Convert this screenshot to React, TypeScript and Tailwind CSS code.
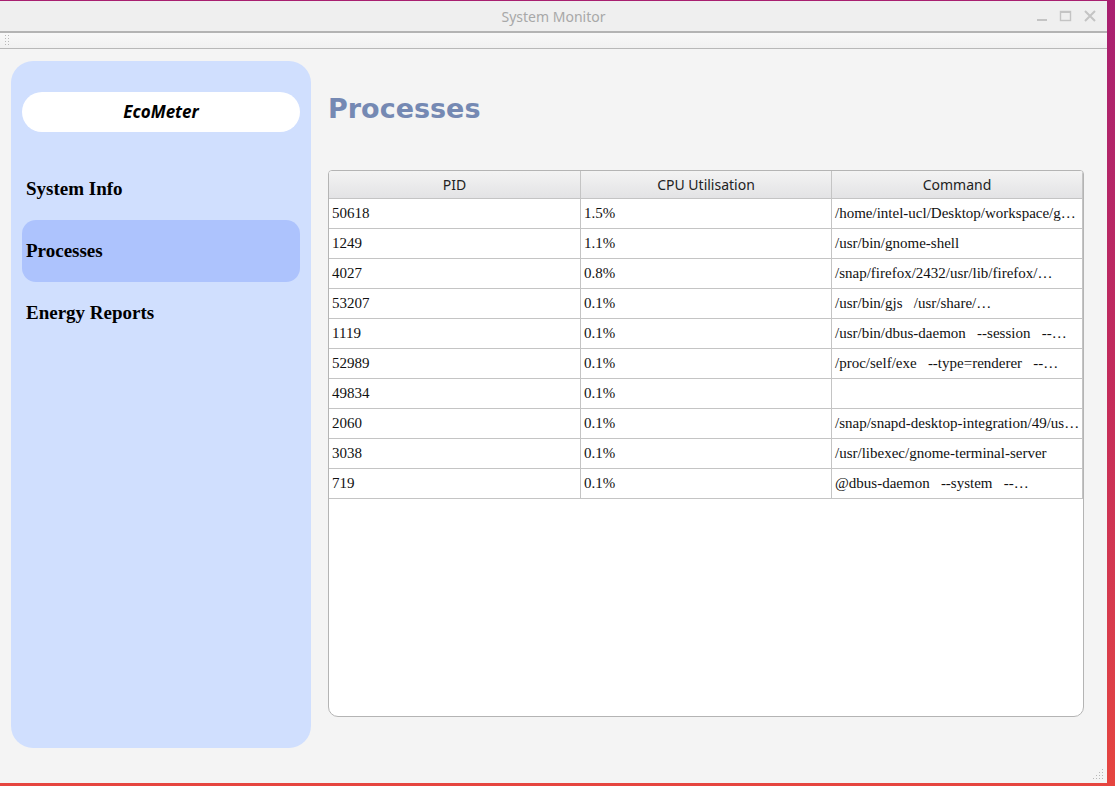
import React from "react";

const rows: [string, string, string][] = [
  ["50618", "1.5%", "/home/intel-ucl/Desktop/workspace/g…"],
  ["1249", "1.1%", "/usr/bin/gnome-shell"],
  ["4027", "0.8%", "/snap/firefox/2432/usr/lib/firefox/…"],
  ["53207", "0.1%", "/usr/bin/gjs   /usr/share/…"],
  ["1119", "0.1%", "/usr/bin/dbus-daemon   --session   --…"],
  ["52989", "0.1%", "/proc/self/exe   --type=renderer   --…"],
  ["49834", "0.1%", ""],
  ["2060", "0.1%", "/snap/snapd-desktop-integration/49/us…"],
  ["3038", "0.1%", "/usr/libexec/gnome-terminal-server"],
  ["719", "0.1%", "@dbus-daemon   --system   --…"],
];

function Grip() {
  const dots: [number, number][] = [
    [9, 0],
    [6, 3], [9, 3],
    [3, 6], [6, 6], [9, 6],
    [0, 9], [3, 9], [6, 9], [9, 9],
  ];
  return (
    <svg width="11" height="11" viewBox="0 0 11 11">
      {dots.map(([x, y], i) => (
        <rect key={i} x={x} y={y} width="1" height="1" fill="#b8b8b8" />
      ))}
    </svg>
  );
}

export default function App() {
  return (
    <div className="w-[1115px] h-[786px] overflow-hidden bg-gradient-to-b from-[#a81f70] via-[#c42b5a] to-[#e6453f] pt-px">
      <div className="w-[1107px] h-[782px] bg-[#f4f4f4] flex flex-col rounded-tr-[3px] relative">
        {/* title bar */}
        <div className="h-[30px] bg-[#efefef] flex items-center justify-center relative shrink-0">
          <span className="text-[14px] text-[#a8a8a8]" style={{ fontFamily: '"Noto Sans", "Open Sans", sans-serif' }}>
            System Monitor
          </span>
          <div className="absolute right-[10px] top-[9px] flex items-center gap-[10px]">
            <svg width="14" height="12" viewBox="0 0 14 12">
              <rect x="2" y="9" width="10" height="2" fill="#c4c4c4" />
            </svg>
            <svg width="14" height="12" viewBox="0 0 14 12">
              <rect x="1.5" y="1.5" width="10" height="9" fill="none" stroke="#c4c4c4" strokeWidth="1.4" />
              <rect x="1" y="1" width="11" height="2" fill="#c4c4c4" />
            </svg>
            <svg width="14" height="12" viewBox="0 0 14 12">
              <path d="M2 1 L12 11 M12 1 L2 11" stroke="#c4c4c4" strokeWidth="2" />
            </svg>
          </div>
        </div>
        <div className="h-[2px] bg-[#b4b4b4] shrink-0" />
        {/* toolbar */}
        <div className="h-[16px] bg-gradient-to-b from-[#f8f8f8] to-[#f1f1f1] border-b border-[#b8b8b8] shrink-0 flex items-center pl-[5px]">
          <svg width="4" height="12" viewBox="0 0 4 12">
            {[0, 3, 6, 9].map((y) => (
              <React.Fragment key={y}>
                <rect x="0" y={y} width="1" height="1" fill="#b8b8b8" />
                <rect x="3" y={y} width="1" height="1" fill="#b8b8b8" />
              </React.Fragment>
            ))}
          </svg>
        </div>
        {/* content */}
        <div className="flex-1 flex pl-[11px] pt-[12px]">
          {/* sidebar */}
          <div className="w-[300px] h-[687px] bg-[#d0dffe] rounded-[22px] px-[11px] pt-[31px] flex flex-col shrink-0">
            <div className="h-[40px] bg-white rounded-full flex items-center justify-center shrink-0">
              <span
                className="text-[17px] font-bold italic text-black"
                style={{ fontFamily: '"Noto Sans", "DejaVu Sans", sans-serif' }}
              >
                EcoMeter
              </span>
            </div>
            <div className="flex flex-col mt-[26px]" style={{ fontFamily: '"Liberation Serif", serif' }}>
              <div className="h-[62px] flex items-center px-[4px] text-[19px] font-bold text-black">
                System Info
              </div>
              <div className="h-[62px] flex items-center px-[4px] text-[19px] font-bold text-black bg-[#adc3fd] rounded-[14px]">
                Processes
              </div>
              <div className="h-[62px] flex items-center px-[4px] text-[19px] font-bold text-black">
                Energy Reports
              </div>
            </div>
          </div>
          {/* main */}
          <div className="ml-[17px] flex flex-col">
            <h1
              className="text-[27px] font-bold text-[#7589b3] mt-[30px] leading-[36px]"
              style={{ fontFamily: '"DejaVu Sans", sans-serif' }}
            >
              Processes
            </h1>
            <div className="mt-[43px] w-[756px] h-[547px] bg-white border border-[#b4b4b4] rounded-[10px] rounded-t-[4px] overflow-hidden">
              <div
                className="flex h-[28px] bg-gradient-to-b from-[#f3f3f3] to-[#e3e3e5] border-b border-[#c4c4c4] text-[14px] text-[#222]"
                style={{ fontFamily: '"Noto Sans", "Open Sans", sans-serif' }}
              >
                <div className="w-[252px] border-r border-[#c4c4c4] flex items-center justify-center">PID</div>
                <div className="w-[251px] border-r border-[#c4c4c4] flex items-center justify-center">CPU Utilisation</div>
                <div className="w-[251px] border-r border-[#c4c4c4] flex items-center justify-center">Command</div>
              </div>
              <div style={{ fontFamily: '"Liberation Serif", serif' }} className="text-[15px] text-[#111]">
                {rows.map((r, i) => (
                  <div key={i} className="flex h-[30px] border-b border-[#c4c4c4] w-[754px]">
                    <div className="w-[252px] border-r border-[#c4c4c4] flex items-center pl-[3px]">{r[0]}</div>
                    <div className="w-[251px] border-r border-[#c4c4c4] flex items-center pl-[3px]">{r[1]}</div>
                    <div className="w-[251px] border-r border-[#c4c4c4] flex items-center pl-[3px] whitespace-pre overflow-hidden">
                      {r[2]}
                    </div>
                  </div>
                ))}
              </div>
            </div>
          </div>
        </div>
        <div className="absolute right-[3px] bottom-[3px]">
          <Grip />
        </div>
      </div>
    </div>
  );
}
